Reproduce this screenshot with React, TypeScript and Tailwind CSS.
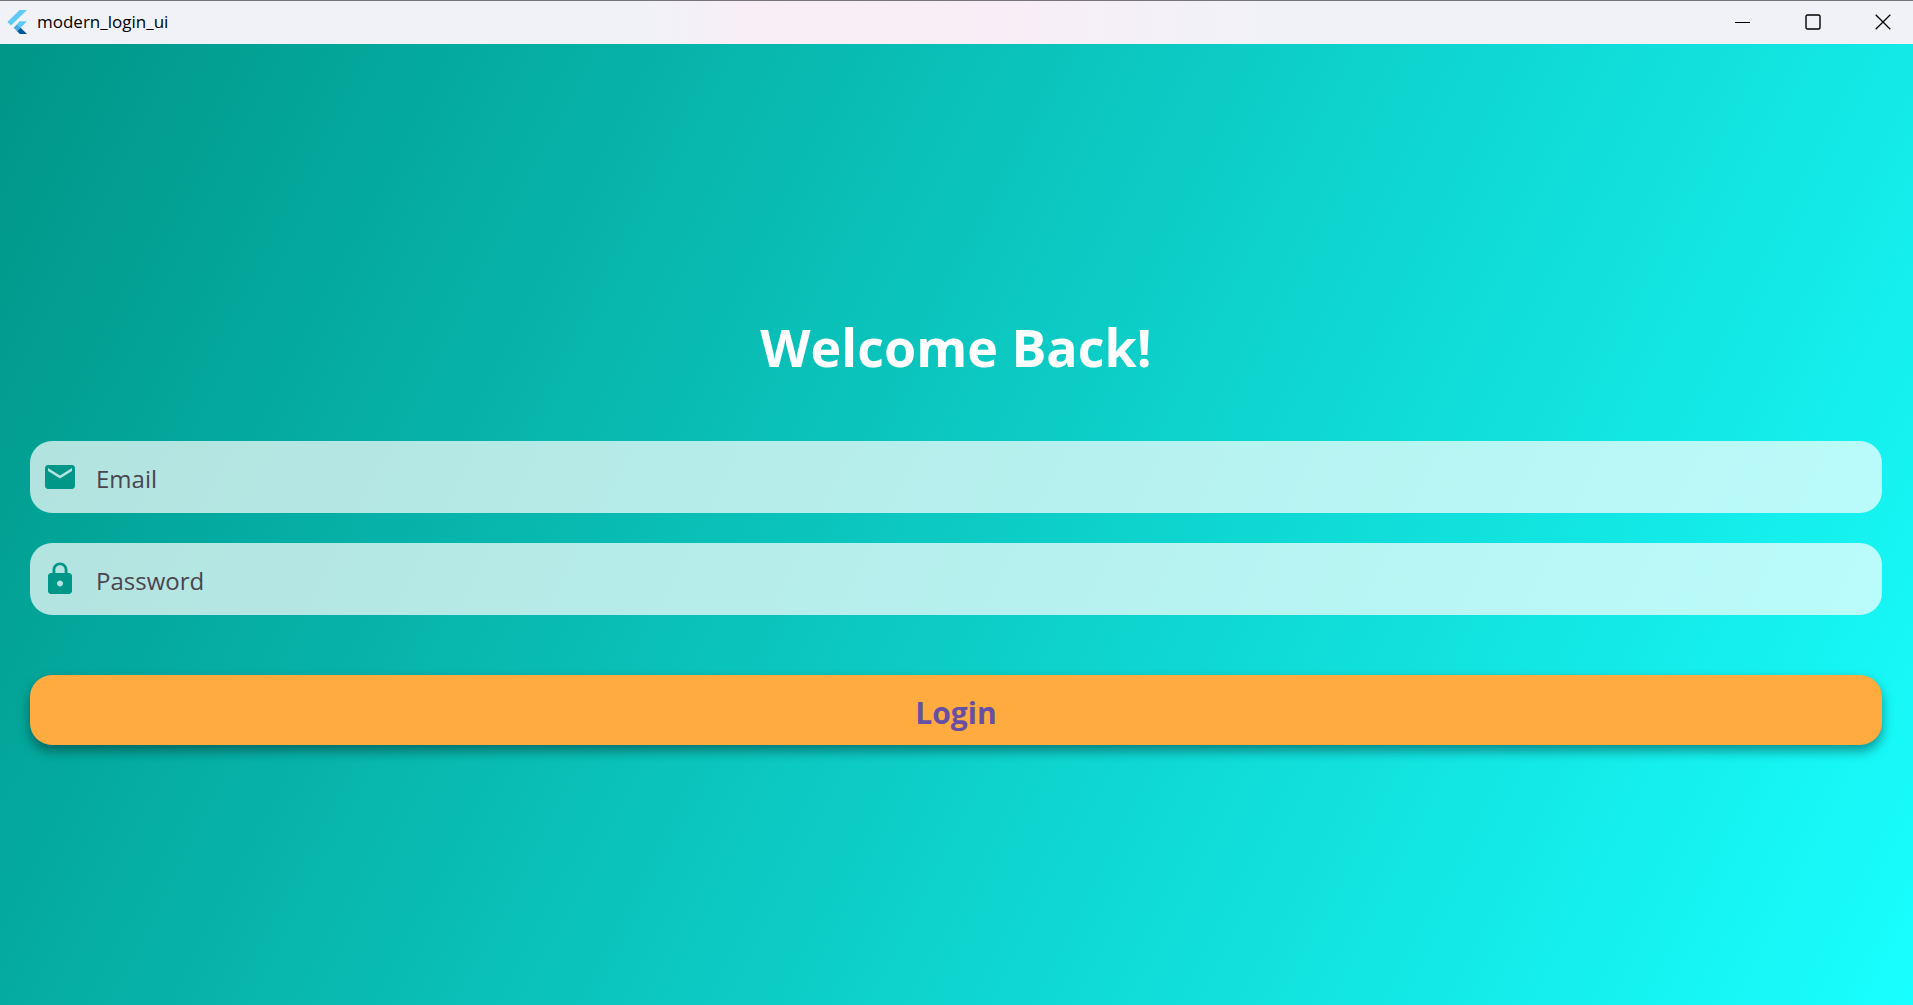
import type { ReactNode } from "react";

function FlutterLogo() {
  return (
    <svg viewBox="0 0 20 24" className="h-6 w-5 shrink-0" aria-hidden="true">
      <path d="M12.6 0H20L4 15.6 .4 12z" fill="#5fc9f8" />
      <path d="M12.6 11.3H20L13.6 17.7 10 14.3z" fill="#5fc9f8" />
      <path d="M6.6 17.7l3.5-3.5 3.6 3.5-3.6 3.5z" fill="#47a9dc" />
      <path d="M10.1 21.2l3.5-3.5L20 24h-7.2z" fill="#01579b" />
    </svg>
  );
}

function WindowButton({ label, children }: { label: string; children: ReactNode }) {
  return (
    <button type="button" aria-label={label} className="flex h-full w-[60px] items-center justify-center">
      <svg viewBox="0 0 16 16" className="size-4" fill="none" stroke="#000" aria-hidden="true">
        {children}
      </svg>
    </button>
  );
}

function TitleBar() {
  return (
    <header className="flex h-11 items-center border-t border-[#77737a] bg-[linear-gradient(90deg,#f1f2f8_34%,#f9edf6_40%,#f9eef5_47%,#f9edf6_50%,#f1f2f8_66%)] pb-0.5 pl-[7px] font-['Open_Sans',sans-serif]">
      <FlutterLogo />
      <span className="ml-2.5 text-[17px] text-black">modern_login_ui</span>
      <div className="ml-auto flex h-full gap-2.5">
        <WindowButton label="Minimize">
          <path d="M0 8.5h15" />
        </WindowButton>
        <WindowButton label="Maximize">
          <rect x="1" y="1" width="14" height="14" rx="1.5" strokeWidth="1.4" />
        </WindowButton>
        <WindowButton label="Close">
          <path d="M.7.7l14.6 14.6M15.3.7L.7 15.3" strokeWidth="1.3" />
        </WindowButton>
      </div>
    </header>
  );
}

function Field({ label, type, icon }: { label: string; type: string; icon: string }) {
  return (
    <label className="flex h-[72px] items-center rounded-[22px] bg-white/70 pl-3">
      <svg viewBox="0 0 24 24" className="size-9 shrink-0" fill="#009688" aria-hidden="true">
        <path d={icon} />
      </svg>
      <input
        type={type}
        aria-label={label}
        placeholder={label}
        className="ml-[18px] h-full min-w-0 flex-1 bg-transparent pt-0.5 text-2xl text-[#49454f] outline-none placeholder:text-[#49454f]"
      />
    </label>
  );
}

const MAIL =
  "M20 4H4c-1.1 0-1.99.9-1.99 2L2 18c0 1.1.9 2 2 2h16c1.1 0 2-.9 2-2V6c0-1.1-.9-2-2-2zm0 4l-8 5-8-5V6l8 5 8-5v2z";
const LOCK =
  "M18 8h-1V6c0-2.76-2.24-5-5-5S7 3.24 7 6v2H6c-1.1 0-2 .9-2 2v10c0 1.1.9 2 2 2h12c1.1 0 2-.9 2-2V10c0-1.1-.9-2-2-2zm-6 9c-1.1 0-2-.9-2-2s.9-2 2-2 2 .9 2 2-.9 2-2 2zm3.1-9H8.9V6c0-1.71 1.39-3.1 3.1-3.1 1.71 0 3.1 1.39 3.1 3.1v2z";

export default function App() {
  return (
    <div className="flex min-h-screen flex-col">
      <TitleBar />
      <main className="flex flex-1 flex-col justify-center bg-[linear-gradient(117deg,#009688,#18ffff)] pr-[31px] pl-[30px] font-['Open_Sans',sans-serif]">
        <form className="flex flex-col" onSubmit={(e) => e.preventDefault()}>
          <h1 className="mb-[52px] text-center text-[52px] leading-[85px] font-bold text-white">Welcome Back!</h1>
          <div className="flex flex-col gap-[30px]">
            <Field label="Email" type="email" icon={MAIL} />
            <Field label="Password" type="password" icon={LOCK} />
          </div>
          <button
            type="submit"
            className="mt-[60px] h-[70px] rounded-[22px] bg-[#ffab40] pt-1 text-[30px] font-bold text-[#6750a4] shadow-[0_6px_12px_rgba(0,0,0,0.4)]"
          >
            Login
          </button>
        </form>
      </main>
    </div>
  );
}
